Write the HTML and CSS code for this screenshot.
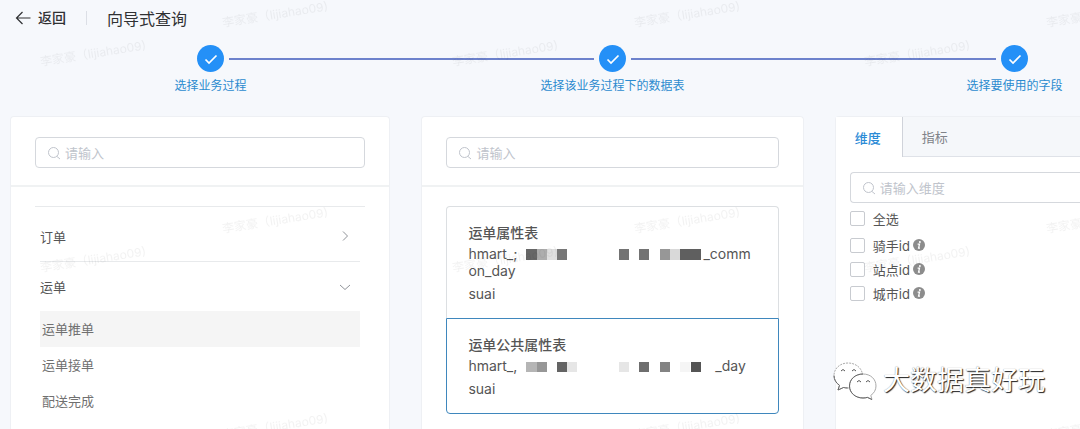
FILE: index.html
```html
<!DOCTYPE html>
<html lang="zh-CN">
<head>
    <meta charset="UTF-8">
    <meta name="viewport" content="width=device-width, initial-scale=1.0">
    <title>向导式查询</title>
    <link rel="stylesheet" href="styles.css">
</head>
<body>
    <!-- Shared icons -->
    <svg class="sprite" aria-hidden="true">
        <symbol id="icon-check" viewBox="0 0 14 14">
            <path d="M1.500 7.500 5 11 12.500 3.500" fill="none" stroke="#fff" stroke-width="1.700"/>
        </symbol>
        <symbol id="icon-search" viewBox="0 0 14 14">
            <circle cx="6.5" cy="6.5" r="5" fill="none" stroke="currentColor"/>
            <path d="M10 10.5 13 13" fill="none" stroke="currentColor"/>
        </symbol>
        <symbol id="icon-info" viewBox="0 0 12 12">
            <circle cx="6" cy="6" r="6" fill="#8c8c8c"/>
            <circle cx="6.9" cy="2.9" r="1" fill="#fff"/>
            <path d="M4.6 5.2H6.5L5.6 9.2H7" fill="none" stroke="#fff" stroke-width="1.3"/>
        </symbol>
    </svg>

    <header class="topbar">
        <button type="button" class="back">
            <svg width="16" height="14" viewBox="0 0 16 14" aria-hidden="true"><path d="M15.500 7H1.500M7.500 1 1.500 7l6 6" fill="none" stroke="currentColor" stroke-width="1.200"/></svg>
            返回
        </button>
        <h1 class="title">向导式查询</h1>
    </header>

    <div class="steps">
        <div class="step">
            <span class="step-icon"><svg width="14" height="14"><use href="#icon-check"/></svg></span>
            <span class="step-label">选择业务过程</span>
        </div>
        <div class="step-line"></div>
        <div class="step">
            <span class="step-icon"><svg width="14" height="14"><use href="#icon-check"/></svg></span>
            <span class="step-label">选择该业务过程下的数据表</span>
        </div>
        <div class="step-line"></div>
        <div class="step">
            <span class="step-icon"><svg width="14" height="14"><use href="#icon-check"/></svg></span>
            <span class="step-label">选择要使用的字段</span>
        </div>
    </div>

    <main class="panels">
        <section class="panel">
            <div class="panel-head">
                <label class="search">
                    <svg width="14" height="14" aria-hidden="true"><use href="#icon-search"/></svg>
                    <input type="text" placeholder="请输入" aria-label="搜索业务过程">
                </label>
            </div>
            <div class="process-list">
                <button type="button" class="group">
                    订单
                    <svg width="12" height="12" viewBox="0 0 12 12" aria-hidden="true"><path d="M4 1.500 8.500 6 4 10.500" fill="none" stroke="#909399"/></svg>
                </button>
                <button type="button" class="group open" aria-expanded="true">
                    运单
                    <svg width="12" height="12" viewBox="0 0 12 12" aria-hidden="true"><path d="M1 4 6 8.500 11 4" fill="none" stroke="#909399"/></svg>
                </button>
                <button type="button" class="item active">运单推单</button>
                <button type="button" class="item">运单接单</button>
                <button type="button" class="item">配送完成</button>
            </div>
        </section>

        <section class="panel">
            <div class="panel-head">
                <label class="search">
                    <svg width="14" height="14" aria-hidden="true"><use href="#icon-search"/></svg>
                    <input type="text" placeholder="请输入" aria-label="搜索数据表">
                </label>
            </div>
            <div class="table-list">
                <button type="button" class="card">
                    <span class="card-title">运单属性表</span>
                    <span class="card-name">hmart_;<svg class="mask" width="186" height="12" viewBox="0 0 186 12" aria-hidden="true">
                        <path d="M9 0h11v11H9z" fill="#676767"/>
                        <path d="M20 0h10v11H20z" fill="#adadad"/>
                        <path d="M30 0h10v11H30z" fill="#dfdfdf"/>
                        <path d="M40 0h10v11H40z" fill="#777"/>
                        <path d="M102 0h10v11h-10zM122 0h10v11h-10z" fill="#737373"/>
                        <path d="M143 0h10v11h-10z" fill="#979797"/>
                        <path d="M153 0h10v11h-10z" fill="#d9d9d9"/>
                        <path d="M163 0h21v11h-21z" fill="#5f5f5f"/>
                    </svg>_common_day</span>
                    <span class="card-owner">suai</span>
                </button>
                <button type="button" class="card selected">
                    <span class="card-title">运单公共属性表</span>
                    <span class="card-name">hmart_,<svg class="mask" width="198" height="12" viewBox="0 0 198 12" aria-hidden="true">
                        <path d="M9 1h11v10H9z" fill="#b5b5b5"/>
                        <path d="M20 1h10v10H20z" fill="#979797"/>
                        <path d="M40 1h10v10H40z" fill="#646464"/>
                        <path d="M50 1h10v10H50zM102 1h10v10h-10z" fill="#e6e6e6"/>
                        <path d="M122 1h10v10h-10z" fill="#6e6e6e"/>
                        <path d="M143 1h10v10h-10z" fill="#838383"/>
                        <path d="M163 1h10v10h-10z" fill="#f5f5f5"/>
                        <path d="M174 1h10v10h-10z" fill="#555"/>
                    </svg>_day</span>
                    <span class="card-owner">suai</span>
                </button>
            </div>
        </section>

        <section class="panel panel-fields">
            <div class="tabs" role="tablist">
                <button type="button" class="tab active" role="tab" aria-selected="true">维度</button>
                <button type="button" class="tab" role="tab" aria-selected="false">指标</button>
            </div>
            <div class="fields">
                <label class="search">
                    <svg width="14" height="14" aria-hidden="true"><use href="#icon-search"/></svg>
                    <input type="text" placeholder="请输入维度" aria-label="搜索维度">
                </label>
                <label class="check check-all"><input type="checkbox">全选</label>
                <label class="check"><input type="checkbox"><span>骑手id</span><svg width="12" height="12"><use href="#icon-info"/></svg></label>
                <label class="check"><input type="checkbox"><span>站点id</span><svg width="12" height="12"><use href="#icon-info"/></svg></label>
                <label class="check"><input type="checkbox"><span>城市id</span><svg width="12" height="12"><use href="#icon-info"/></svg></label>
            </div>
        </section>
    </main>

    <!-- Repeating user watermark -->
    <svg class="watermark" aria-hidden="true">
        <defs>
            <pattern id="user-mark" width="412" height="206" patternUnits="userSpaceOnUse">
                <text transform="translate(41 66) rotate(-9)">李家豪（lijiahao09)</text>
                <text transform="translate(223 27) rotate(-9)">李家豪（lijiahao09)</text>
            </pattern>
        </defs>
        <rect width="100%" height="100%" fill="url(#user-mark)"/>
    </svg>

    <div class="brand">
        <svg width="44" height="38" viewBox="0 0 44 38" aria-hidden="true">
            <g fill="#fff" stroke="#aaa" stroke-width="1" stroke-linejoin="round">
                <path d="M15 1C7 1 1 6.500 1 13.500c0 4 2 7.500 5.500 9.800L5 28l5.500-2.500c1.500.4 3 .5 4.500.5 8 0 14.500-5.500 14.500-12.500S23 1 15 1z" stroke-dasharray="2 1"/>
                <path d="M30 12c-7.500 0-13.500 5-13.500 12S22.500 36 30 36c1.600 0 3-.2 4.400-.6L39 37.500l-1.200-4.100c3.200-2.200 5.200-5.500 5.200-9.400 0-7-5.500-12-13-12z"/>
            </g>
            <path d="M1 13.500c0 4 2 7.500 5.500 9.800L5 28l5.500-2.500c1.500.4 3 .5 4.500.5M30 12c-7.500 0-13.500 5-13.500 12S22.500 36 30 36c1.600 0 3-.2 4.400-.6L39 37.500" fill="none" stroke="#666"/>
            <path d="M8 9q2-3 4 0M19 9q2-3 4 0M24 20q2-3 4 0M33 20q2-3 4 0" fill="none" stroke="#555"/>
        </svg>
        <span>大数据真好玩</span>
    </div>
</body>
</html>
```
FILE: styles.css
```css
* {
    box-sizing: border-box;
}

body {
    position: relative;
    display: flex;
    flex-direction: column;
    min-height: 100vh;
    margin: 0;
    overflow: hidden;
    background: #f6f8fc;
    color: #555;
    font-family: Inter, "Noto Sans CJK SC", sans-serif;
    font-size: 13px;
}

button, input {
    margin: 0;
    font: inherit;
    color: inherit;
}

button {
    padding: 0;
    border: 0;
    background: none;
    text-align: left;
    cursor: pointer;
}

.sprite {
    position: absolute;
    width: 0;
    height: 0;
}

/* Header */
.topbar {
    display: flex;
    align-items: center;
    height: 35px;
    padding-left: 15px;
    color: #303133;
}

.back {
    display: flex;
    align-items: center;
    gap: 7px;
    padding-right: 20px;
    font-size: 14px;
    font-weight: 500;
    line-height: 14px;
    border-right: 1px solid #dcdfe6;
}

.title {
    margin: 0 0 0 20px;
    font-size: 16px;
    font-weight: 400;
}

/* Steps */
.steps {
    display: flex;
    align-items: flex-start;
    padding: 10px 52px 0 197px;
}

.step {
    display: flex;
    flex-direction: column;
    align-items: center;
    width: 27px;
    height: 71px;
}

.step-icon {
    display: flex;
    flex: none;
    align-items: center;
    justify-content: center;
    width: 27px;
    height: 27px;
    border-radius: 50%;
    background: #2490f7;
}

.step-label {
    margin-top: 5px;
    color: #2c8bcf;
    font-size: 12px;
    line-height: 18px;
    white-space: nowrap;
}

.step-line {
    flex: 1;
    height: 2px;
    margin: 13px 5px 0;
    background: #6d82cc;
}

/* Panels */
.panels {
    display: grid;
    flex: 1;
    grid-template-columns: 380fr 382fr 245fr;
    gap: 31px;
    padding-left: 10px;
}

.panel {
    min-width: 0;
    border: 1px solid #eef0f4;
    border-bottom: 0;
    border-radius: 4px 4px 0 0;
    background: #fff;
}

.panel-head {
    padding: 20px 24px 17px;
    border-bottom: 2px solid #f0f2f3;
}

.search {
    display: flex;
    align-items: center;
    gap: 4px;
    height: 31px;
    padding: 0 11px;
    border: 1px solid #d5d8dd;
    border-radius: 4px;
    color: #c0c4cc;
}

.search svg {
    flex: none;
}

.search input {
    flex: 1;
    min-width: 0;
    padding: 0;
    border: 0;
    outline: 0;
    background: none;
    color: #555;
}

.search input::placeholder {
    color: #c0c4cc;
}

.process-list {
    margin: 19px 24px 0;
    padding: 0 5px;
    border-top: 1px solid #e8eaec;
}

.group {
    display: flex;
    align-items: center;
    justify-content: space-between;
    width: 100%;
    height: 55px;
    padding: 4px 9px 0 0;
    border-bottom: 1px solid #e8eaec;
}

.group.open {
    height: 49px;
    padding: 0 9px 0 0;
    border-bottom: 0;
}

.item {
    display: block;
    width: 100%;
    height: 36px;
    padding: 0 0 2px 2px;
    color: #707070;
}

.item.active {
    background: #f5f5f5;
}

/* Table cards */
.table-list {
    padding: 19px 24px 0;
}

.card {
    display: block;
    width: 100%;
    padding: 16px 21px 15px;
    border: 1px solid #dcdfe2;
    border-bottom: 0;
    border-radius: 4px 4px 0 0;
    font-size: 14px;
}

.card.selected {
    border: 1px solid #3f87bd;
    border-radius: 0 0 4px 4px;
}

.card span {
    display: block;
}

.card-title {
    font-weight: 500;
    line-height: 20px;
}

.card-name {
    margin-top: 2px;
    line-height: 17px;
    word-break: break-all;
}

.card .card-owner {
    margin-top: 6px;
    line-height: 18px;
}

.mask {
    vertical-align: -2px;
}

/* Fields */
.panel-fields {
    border-right: 0;
    border-radius: 4px 0 0 0;
}

.tabs {
    display: flex;
    height: 40px;
    border-bottom: 1px solid #dfe2e8;
    background: #f5f7fa;
}

.tab {
    padding: 0 19px;
    color: #808389;
}

.tab.active {
    height: 40px;
    padding: 0 21px 0 19px;
    border-right: 1px solid #d0d3da;
    background: #fff;
    color: #2c8bd6;
    font-weight: 500;
}

.fields {
    padding: 15px 0 0 14px;
}

.fields .search {
    border-right: 0;
    border-radius: 4px 0 0 4px;
}

.check {
    display: flex;
    align-items: center;
    height: 24px;
}

.check-all {
    height: 30px;
}

.check input {
    width: 15px;
    height: 15px;
    margin-right: 8px;
    border: 1px solid #c8cbd0;
    border-radius: 2px;
    background: #fff;
    appearance: none;
}

.check input:checked {
    border-color: #2490f7;
    background: #2490f7;
}

.check svg {
    margin-left: 3px;
}

/* Overlays */
.watermark {
    position: absolute;
    inset: 0;
    width: 100%;
    height: 100%;
    pointer-events: none;
}

.watermark text {
    fill: #000;
    fill-opacity: 0.05;
    font-size: 12px;
}

.brand {
    position: absolute;
    right: 35px;
    bottom: 28px;
    display: flex;
    align-items: center;
    gap: 6px;
    color: #fff;
    font-size: 27px;
    line-height: 40px;
    text-shadow: 1px 1px 1px #222, 0 0 1px #888;
    pointer-events: none;
}
```
